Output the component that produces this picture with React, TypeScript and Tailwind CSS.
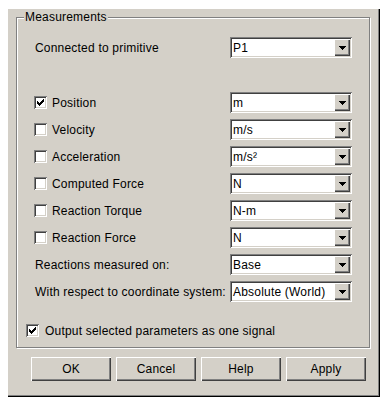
const font = { fontFamily: '"Liberation Sans", Arial, sans-serif', letterSpacing: "0.2px" };

const sunken =
  "shadow-[inset_1px_1px_0_#808080,inset_-1px_-1px_0_#ffffff,inset_2px_2px_0_#404040,inset_-2px_-2px_0_#d4d0c8]";
const raised =
  "shadow-[inset_1px_1px_0_#ffffff,inset_-1px_-1px_0_#404040,inset_-2px_-2px_0_#808080]";

const Check = ({ checked }: { checked?: boolean }) => (
  <div className={`w-[13px] h-[13px] bg-white flex items-center justify-center shrink-0 ${sunken}`}>
    {checked && (
      <svg width="7" height="7" viewBox="0 0 7 7" shapeRendering="crispEdges">
        <path
          d="M6 0h1v1h-1zM5 1h2v1h-2zM0 2h1v1h-1zM4 2h3v1h-3zM0 3h2v1h-2zM3 3h3v1h-3zM0 4h5v1h-5zM1 5h3v1h-3zM2 6h1v1h-1z"
          fill="#000"
        />
      </svg>
    )}
  </div>
);

const Combo = ({ value }: { value: string }) => (
  <div className={`w-[122px] h-[21px] bg-white flex items-center justify-between pl-[3px] pr-[2px] ${sunken}`}>
    <span className="text-[12px] text-black leading-none">{value}</span>
    <div className={`w-[16px] h-[17px] bg-[#d4d0c8] flex items-center justify-center ${raised}`}>
      <svg width="7" height="4" viewBox="0 0 7 4" shapeRendering="crispEdges">
        <path d="M0 0h7v1h-7zM1 1h5v1h-5zM2 2h3v1h-3zM3 3h1v1h-1z" fill="#000" />
      </svg>
    </div>
  </div>
);

const CheckRow = ({ label, unit, checked }: { label: string; unit: string; checked?: boolean }) => (
  <div className="flex items-center justify-between h-[21px] mt-[6px]">
    <div className="flex items-center gap-[5px]">
      <Check checked={checked} />
      <span className="text-[12px] text-black">{label}</span>
    </div>
    <Combo value={unit} />
  </div>
);

const LabelRow = ({ label, value, top = "mt-[6px]" }: { label: string; value: string; top?: string }) => (
  <div className={`flex items-center justify-between h-[21px] ${top}`}>
    <span className="text-[12px] text-black ml-[1px]">{label}</span>
    <Combo value={value} />
  </div>
);

const Button = ({ label }: { label: string }) => (
  <div className={`w-[80px] h-[24px] flex items-center justify-center text-[12px] text-black bg-[#d4d0c8] ${raised}`}>
    {label}
  </div>
);

export default function App() {
  return (
    <div className="w-[388px] h-[410px] bg-white pt-[8px] pl-[7px]" style={font}>
      <div className="w-[373px] h-[389px] bg-[#d4d0c8] pt-[9px] pl-[9px] shadow-[inset_1px_1px_0_#ffffff,inset_-1px_-1px_0_#000000,inset_-2px_-2px_0_#808080]">
        <div className="relative w-[354px] h-[331px] border border-[#808080] shadow-[inset_1px_1px_0_#ffffff,1px_1px_0_#ffffff] pt-[19px] pl-[17px] pr-[17px]">
          <span className="absolute left-[7px] top-[-8px] px-[1px] bg-[#d4d0c8] text-[12px] leading-[14px] text-black">
            Measurements
          </span>
          <LabelRow label="Connected to primitive" value="P1" top="mt-0" />
          <div className="h-[28px]" />
          <CheckRow label="Position" unit="m" checked />
          <CheckRow label="Velocity" unit="m/s" />
          <CheckRow label="Acceleration" unit="m/s²" />
          <CheckRow label="Computed Force" unit="N" />
          <CheckRow label="Reaction Torque" unit="N-m" />
          <CheckRow label="Reaction Force" unit="N" />
          <LabelRow label="Reactions measured on:" value="Base" />
          <LabelRow label="With respect to coordinate system:" value="Absolute (World)" />
          <div className="flex items-center gap-[6px] h-[21px] mt-[18px] -ml-[8px]">
            <Check checked />
            <span className="text-[12px] text-black">Output selected parameters as one signal</span>
          </div>
        </div>
        <div className="flex gap-[5px] mt-[9px] ml-[15px]">
          <Button label="OK" />
          <Button label="Cancel" />
          <Button label="Help" />
          <Button label="Apply" />
        </div>
      </div>
    </div>
  );
}
